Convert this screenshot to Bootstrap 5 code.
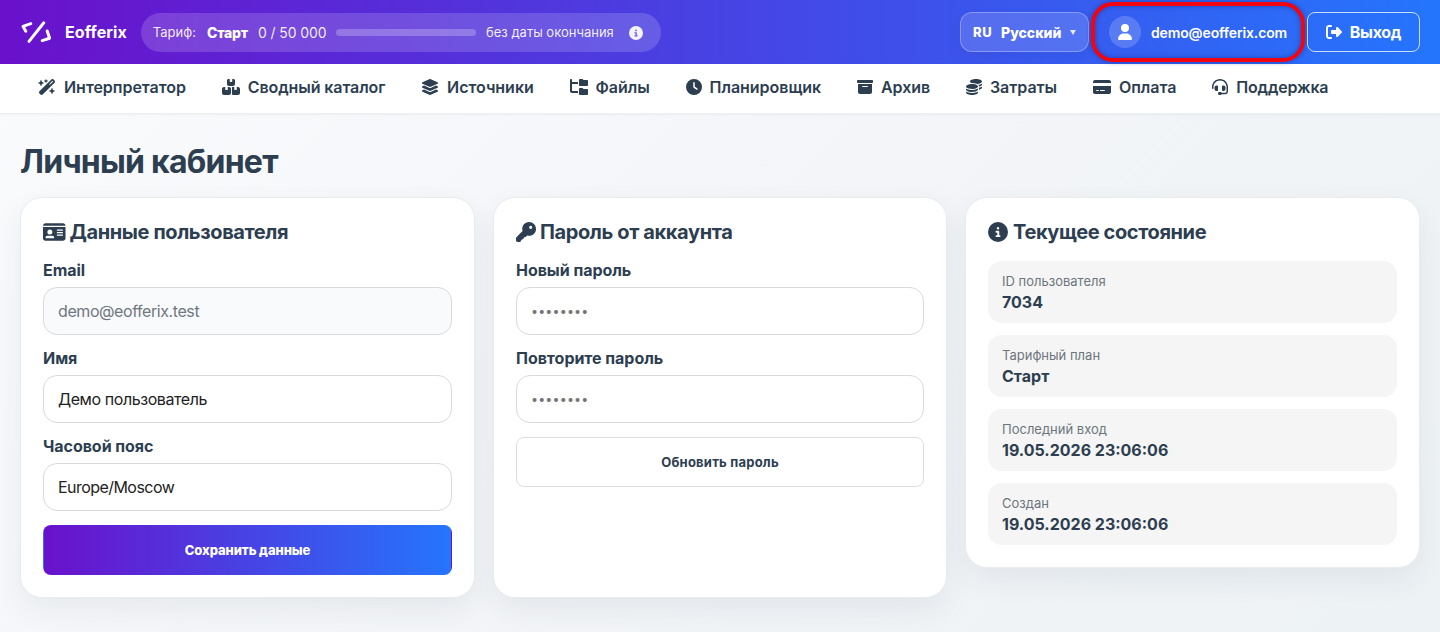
<!DOCTYPE html>
<html lang="ru">
<head>
<meta charset="utf-8">
<meta name="viewport" content="width=device-width, initial-scale=1">
<title>Личный кабинет — Eofferix</title>
<link href="https://cdn.jsdelivr.net/npm/bootstrap@5.3.0/dist/css/bootstrap.min.css" rel="stylesheet">
<style>
body{font-family:Inter,"Liberation Sans",sans-serif;font-size:16px;line-height:1.5;color:#2c3e50;min-height:632px;background:linear-gradient(135deg,#fafbfd 0%,#f3f5f8 50%,#edf2f5 100%);overflow:hidden}
.fa{height:1em;width:auto;fill:currentColor;flex:none;display:block}
.topbar{height:64px;background:linear-gradient(90deg,#6a11cb,#2575fc);padding:0 20px;color:#fff}
.brand-name{margin-left:13px;letter-spacing:.1px}
.plan{height:39px;border-radius:20px;background:rgba(255,255,255,.16);padding:1px 18px 0 12px;font-size:13px;margin-left:14px;width:520px;color:rgba(255,255,255,.92)}
.plan-name{font-size:14px;font-weight:800;color:#fff;margin:0 10px 0 11px;letter-spacing:-.2px}
.plan-usage{font-size:14px;letter-spacing:-.12px;width:69px;white-space:nowrap}
.meter{width:140px;height:7px;border-radius:4px;background:rgba(255,255,255,.24);margin:0 10px 0 9px}
.lang{height:40px;width:129px;border:1px solid rgba(255,255,255,.3);border-radius:12px;background:rgba(255,255,255,.14);font-size:14px;font-weight:800;padding:1px 12px 0;box-shadow:0 4px 12px rgba(0,0,0,.05)}
.lang-code{font-size:13px;letter-spacing:.6px;width:28px;padding-top:1px}
.caret{width:6px;height:5px;background:rgba(255,255,255,.85);clip-path:polygon(0 0,100% 0,50% 100%)}
.acct{width:214px;height:60px;border:4px solid #f2050f;border-radius:22px;margin:0 2px;padding-left:14px;font-size:14px;font-weight:600;letter-spacing:-.13px;gap:10px;box-shadow:0 0 5px rgba(20,20,100,.45),inset 0 0 5px rgba(20,20,100,.45)}
.face{width:32px;height:32px;background:rgba(255,255,255,.18);font-size:16px}
.exit{height:40px;width:113px;border:1px solid rgba(255,255,255,.75);border-radius:8px;font-weight:700;letter-spacing:-.3px;gap:8px;color:#fff;padding:0}
.menubar{height:50px;padding:0 20px;background:#fff;border-bottom:1px solid #eceff2;font-weight:600;box-shadow:0 1px 3px rgba(0,0,0,.04)}
.menubar a{color:#2c3e50;gap:8px;padding:0 17.8px 0 18px;height:46px;white-space:nowrap;letter-spacing:-.03px}
h1{font-size:32px;font-weight:700;line-height:38px;letter-spacing:-.76px;margin:0 0 16px}
.page-area{padding:29px 20px 0}
.panels{display:grid;grid-template-columns:455px 454px 455px;gap:18px;align-items:start}
.panel{background:#fff;border:1px solid #e9ecef;border-radius:22px;padding:22px;box-shadow:0 12px 30px rgba(40,50,70,.07)}
.panel.tall{height:401px}
h2{font-size:20px;font-weight:700;line-height:24px;letter-spacing:-.39px;margin:0 0 16px;gap:4px}
h2.state-title{gap:5px;margin-bottom:17px}
.form-label{font-weight:700;line-height:20px;letter-spacing:-.04px;margin:0 0 7px;display:block}
.form-control{height:48px;border-radius:14px;border-color:#d9dadc;padding:0 14px;margin-bottom:13px;color:#222;font-size:16px;letter-spacing:-.42px}
.form-control:disabled{background:#f9fafc;color:#6f7780}
.form-control::placeholder{color:#757575;font-size:12.5px;letter-spacing:.15px;position:relative;top:-1px}
.act{height:50px;width:100%;border-radius:8px;font-size:13px;font-weight:700;margin-top:1px;padding-top:8px}
.act.save{background-image:linear-gradient(90deg,#6a11cb,#2575fc);border-color:transparent;color:#fff;font-weight:800;letter-spacing:-.1px}
.act.renew{border:1px solid #dcdee1;color:#2c3e50;letter-spacing:.22px}
.fact{height:62px;border-radius:14px;background:#f5f5f5;padding:11px 14px;margin-bottom:12px;font-weight:700;line-height:21px}
.fact:last-child{margin-bottom:0}
.fact small{font-size:13px;font-weight:400;color:#6c757d;line-height:19px;margin-bottom:1px;display:block}
</style>
</head>
<body>
<header class="topbar d-flex align-items-center">
  <svg width="32" height="24" viewBox="0 0 32 24" fill="none" stroke="#fff" stroke-width="3" stroke-linecap="round" stroke-linejoin="round"><path d="M10.800 3.700 3 6.300 5.800 11.200M23.800 2.800 9 21.400M27.200 11l2.400 7.200-7.400 2.400"/></svg>
  <strong class="brand-name">Eofferix</strong>
  <div class="plan d-flex align-items-center">
    <span>Тариф:</span><strong class="plan-name">Старт</strong><span class="plan-usage">0 / 50 000</span>
    <div class="meter"></div><span>без даты окончания</span>
    <svg class="fa ms-auto" style="font-size:14px" viewBox="0 0 512 512"><path d="M256 512A256 256 0 1 0 256 0a256 256 0 1 0 0 512zM216 336h24V272H216c-13.300 0-24-10.700-24-24s10.700-24 24-24h48c13.300 0 24 10.700 24 24v88h8c13.300 0 24 10.700 24 24s-10.700 24-24 24H216c-13.300 0-24-10.700-24-24s10.700-24 24-24zm40-208a32 32 0 1 1 0 64 32 32 0 1 1 0-64z"/></svg>
  </div>
  <div class="lang ms-auto d-flex align-items-center"><span class="lang-code">RU</span><span>Русский</span><i class="caret ms-auto"></i></div>
  <div class="acct d-flex align-items-center">
    <span class="face rounded-circle d-flex align-items-center justify-content-center"><svg class="fa" viewBox="0 0 448 512"><path d="M224 256A128 128 0 1 0 224 0a128 128 0 1 0 0 256zm-45.700 48C79.800 304 0 383.800 0 482.300C0 498.700 13.300 512 29.700 512H418.300c16.400 0 29.700-13.300 29.700-29.700C448 383.800 368.200 304 269.700 304H178.300z"/></svg></span>
    <span>demo@eofferix.com</span>
  </div>
  <a class="exit btn d-flex align-items-center justify-content-center"><svg class="fa" viewBox="0 0 512 512"><path d="M377.900 105.900L500.700 228.700c7.200 7.200 11.300 17.100 11.300 27.300s-4.100 20.100-11.300 27.300L377.900 406.100c-6.400 6.400-15 9.900-24 9.900c-18.700 0-33.900-15.200-33.900-33.900l0-62.100-128 0c-17.700 0-32-14.300-32-32l0-64c0-17.700 14.300-32 32-32l128 0 0-62.100c0-18.700 15.200-33.900 33.900-33.900c9 0 17.600 3.600 24 9.900zM160 96L96 96c-17.700 0-32 14.300-32 32l0 256c0 17.700 14.300 32 32 32l64 0c17.700 0 32 14.300 32 32s-14.300 32-32 32l-64 0c-53 0-96-43-96-96L0 128C0 75 43 32 96 32l64 0c17.700 0 32 14.300 32 32s-14.300 32-32 32z"/></svg>Выход</a>
</header>
<nav class="menubar d-flex">
  <a class="d-flex align-items-center text-decoration-none"><svg class="fa" viewBox="0 0 576 512"><path d="M234.700 42.700L197 56.800c-3 1.100-5 4-5 7.200s2 6.100 5 7.200l37.700 14.100L248.800 123c1.100 3 4 5 7.200 5s6.100-2 7.200-5l14.100-37.700L315 71.200c3-1.100 5-4 5-7.200s-2-6.100-5-7.200L277.300 42.700 263.200 5c-1.100-3-4-5-7.200-5s-6.100 2-7.200 5L234.700 42.700zM46.100 395.400c-18.700 18.700-18.700 49.100 0 67.900l34.600 34.600c18.700 18.700 49.100 18.700 67.900 0L529.900 116.500c18.700-18.700 18.700-49.100 0-67.900L495.300 14.100c-18.700-18.700-49.100-18.700-67.900 0L46.100 395.400zM484.600 82.600l-105 105-23.300-23.300 105-105 23.300 23.300zM7.500 117.200C3 118.900 0 123.200 0 128s3 9.100 7.500 10.800L64 160l21.200 56.500c1.700 4.500 6 7.500 10.800 7.500s9.100-3 10.800-7.500L128 160l56.500-21.200c4.500-1.700 7.500-6 7.500-10.800s-3-9.100-7.500-10.800L128 96 106.800 39.500C105.100 35 100.800 32 96 32s-9.100 3-10.800 7.500L64 96 7.500 117.200zm352 256c-4.500 1.700-7.500 6-7.500 10.800s3 9.100 7.500 10.800L416 416l21.200 56.500c1.700 4.500 6 7.500 10.800 7.500s9.100-3 10.800-7.500L480 416l56.500-21.200c4.500-1.700 7.500-6 7.500-10.800s-3-9.100-7.500-10.800L480 352l-21.200-56.500c-1.700-4.500-6-7.500-10.800-7.500s-9.100 3-10.800 7.500L416 352l-56.500 21.200z"/></svg>Интерпретатор</a>
  <a class="d-flex align-items-center text-decoration-none" style="letter-spacing:-.1px"><svg class="fa" viewBox="0 0 576 512"><path d="M248 0H208c-26.500 0-48 21.500-48 48V160c0 35.300 28.700 64 64 64H352c35.300 0 64-28.700 64-64V48c0-26.500-21.500-48-48-48H328V80c0 8.800-7.200 16-16 16H264c-8.800 0-16-7.200-16-16V0zM64 256c-35.300 0-64 28.700-64 64V448c0 35.300 28.700 64 64 64H224c35.300 0 64-28.700 64-64V320c0-35.300-28.700-64-64-64H184v80c0 8.800-7.200 16-16 16H120c-8.800 0-16-7.200-16-16V256H64zM352 512H512c35.300 0 64-28.700 64-64V320c0-35.300-28.700-64-64-64H472v80c0 8.800-7.200 16-16 16H408c-8.800 0-16-7.200-16-16V256H352c-15 0-28.800 5.100-39.700 13.800c4.900 10.400 7.700 22 7.700 34.200V464c0 12.200-2.800 23.800-7.700 34.200C323.200 506.900 337 512 352 512z"/></svg>Сводный каталог</a>
  <a class="d-flex align-items-center text-decoration-none"><svg class="fa" viewBox="0 0 576 512"><path d="M264.500 5.200c14.900-6.900 32.100-6.900 47 0l218.600 101c8.500 3.900 13.900 12.400 13.900 21.800s-5.400 17.900-13.900 21.800l-218.600 101c-14.900 6.900-32.100 6.900-47 0L45.900 149.800C37.400 145.800 32 137.300 32 128s5.400-17.900 13.900-21.800L264.500 5.200zM476.900 209.600l53.200 24.600c8.500 3.900 13.900 12.400 13.900 21.800s-5.400 17.900-13.900 21.800l-218.600 101c-14.900 6.900-32.100 6.900-47 0L45.900 277.800C37.400 273.800 32 265.300 32 256s5.400-17.900 13.900-21.800l53.200-24.600 152 70.200c23.400 10.800 50.400 10.800 73.800 0l152-70.200zm-152 198.200l152-70.200 53.200 24.600c8.500 3.900 13.900 12.400 13.900 21.800s-5.400 17.900-13.900 21.800l-218.600 101c-14.900 6.900-32.100 6.900-47 0L45.900 405.800C37.400 401.800 32 393.300 32 384s5.400-17.900 13.900-21.800l53.200-24.600 152 70.200c23.400 10.800 50.400 10.800 73.800 0z"/></svg>Источники</a>
  <a class="d-flex align-items-center text-decoration-none"><svg class="fa" viewBox="0 0 576 512"><path d="M64 32C64 14.300 49.700 0 32 0S0 14.300 0 32v96V384c0 35.300 28.700 64 64 64H256V384H64V160H256V96H64V32zM288 192c0 17.700 14.300 32 32 32H544c17.700 0 32-14.300 32-32V64c0-17.700-14.300-32-32-32H445.300c-8.500 0-16.600-3.400-22.600-9.400L409.400 9.400c-6-6-14.100-9.400-22.600-9.400H320c-17.700 0-32 14.300-32 32V192zm0 288c0 17.700 14.300 32 32 32H544c17.700 0 32-14.300 32-32V352c0-17.700-14.300-32-32-32H445.300c-8.500 0-16.600-3.400-22.600-9.400l-13.300-13.300c-6-6-14.100-9.400-22.600-9.400H320c-17.700 0-32 14.300-32 32V480z"/></svg>Файлы</a>
  <a class="d-flex align-items-center text-decoration-none"><svg class="fa" viewBox="0 0 512 512"><path d="M256 0a256 256 0 1 1 0 512A256 256 0 1 1 256 0zM232 120V256c0 8 4 15.500 10.700 20l96 64c11 7.400 25.900 4.400 33.300-6.700s4.400-25.900-6.700-33.300L280 243.200V120c0-13.300-10.700-24-24-24s-24 10.700-24 24z"/></svg>Планировщик</a>
  <a class="d-flex align-items-center text-decoration-none"><svg class="fa" viewBox="0 0 512 512"><path d="M32 32H480c17.700 0 32 14.300 32 32V96c0 17.700-14.300 32-32 32H32C14.300 128 0 113.700 0 96V64C0 46.300 14.300 32 32 32zm0 128H480V416c0 35.300-28.700 64-64 64H96c-35.300 0-64-28.700-64-64V160zm128 80c0 8.800 7.200 16 16 16H336c8.800 0 16-7.200 16-16s-7.200-16-16-16H176c-8.800 0-16 7.200-16 16z"/></svg>Архив</a>
  <a class="d-flex align-items-center text-decoration-none"><svg class="fa" viewBox="0 0 512 512"><path d="M512 80c0 18-14.300 34.600-38.400 48c-29.100 16.100-72.500 27.500-122.300 30.900c-3.700-1.800-7.400-3.500-11.300-5C300.600 137.400 248.200 128 192 128c-8.300 0-16.400 .2-24.500 .6l-1.100-.6C142.300 114.600 128 98 128 80c0-44.200 86-80 192-80S512 35.800 512 80zM160.700 161.100c10.200-.7 20.700-1.100 31.300-1.100c62.200 0 117.400 12.300 152.500 31.400C369.300 204.900 384 221.700 384 240c0 4-.7 7.900-2.100 11.700c-4.600 13.200-17 25.300-35 35.500l-1.300 .7c-35 19.400-90.800 32-153.600 32c-59.600 0-112.900-11.300-148.200-29.100c-1.900-.9-3.700-1.900-5.500-2.900C14.300 274.600 0 258 0 240c0-34.800 53.400-64.500 128-75.400c10.500-1.500 21.400-2.700 32.700-3.500zM416 240c0-21.900-10.600-39.900-24.100-53.400c28.300-4.400 54.200-11.400 76.200-20.500c16.300-6.800 31.500-15.200 43.900-25.500V176c0 19.300-16.500 37.100-43.800 50.900c-14.600 7.400-32.400 13.700-52.400 18.500c.1-1.800 .2-3.500 .2-5.300zm-32 96c0 18-14.300 34.600-38.400 48c-1.800 1-3.600 1.900-5.500 2.900C304.900 404.700 251.600 416 192 416c-62.800 0-118.600-12.600-153.600-32C14.300 370.600 0 354 0 336V300.600c12.500 10.300 27.600 18.700 43.900 25.500C83.400 342.600 135.800 352 192 352s108.600-9.400 148.100-25.900c7.800-3.200 15.300-6.900 22.400-10.900c6.100-3.400 11.800-7.200 17.200-11.200c1.500-1.100 2.900-2.300 4.300-3.400V336zm32 0V278.100c19-4.200 36.500-9.500 52.100-16c16.300-6.800 31.500-15.200 43.900-25.500V272c0 10.500-5 21-14.900 30.900c-16.300 16.300-45 29.700-81.300 38.400c.1-1.700 .2-3.500 .2-5.300zM192 448c56.200 0 108.600-9.400 148.100-25.900c16.300-6.800 31.500-15.200 43.900-25.500V432c0 44.200-86 80-192 80S0 476.200 0 432V396.600c12.500 10.300 27.600 18.700 43.900 25.500C83.400 438.600 135.800 448 192 448z"/></svg>Затраты</a>
  <a class="d-flex align-items-center text-decoration-none"><svg class="fa" viewBox="0 0 576 512"><path d="M64 32C28.700 32 0 60.700 0 96v32H576V96c0-35.300-28.700-64-64-64H64zM576 224H0V416c0 35.300 28.700 64 64 64H512c35.300 0 64-28.700 64-64V224zM112 352h64c8.800 0 16 7.200 16 16s-7.200 16-16 16H112c-8.800 0-16-7.200-16-16s7.200-16 16-16zm112 16c0-8.800 7.200-16 16-16H368c8.800 0 16 7.200 16 16s-7.200 16-16 16H240c-8.800 0-16-7.200-16-16z"/></svg>Оплата</a>
  <a class="d-flex align-items-center text-decoration-none" style="letter-spacing:-.15px"><svg class="fa" viewBox="0 0 512 512"><path d="M256 48C141.100 48 48 141.100 48 256v40c0 13.300-10.700 24-24 24s-24-10.700-24-24V256C0 114.600 114.600 0 256 0S512 114.600 512 256V400.100c0 48.600-39.400 88-88.100 88L313.600 488c-8.300 14.300-23.800 24-41.600 24H240c-26.500 0-48-21.500-48-48s21.500-48 48-48h32c17.800 0 33.300 9.700 41.600 24l110.400 .1c22.100 0 40-17.900 40-40V256c0-114.900-93.100-208-208-208zM144 208h16c17.700 0 32 14.300 32 32V352c0 17.700-14.300 32-32 32H144c-35.300 0-64-28.700-64-64V272c0-35.300 28.700-64 64-64zm224 0c35.300 0 64 28.700 64 64v48c0 35.300-28.700 64-64 64H352c-17.700 0-32-14.300-32-32V240c0-17.700 14.300-32 32-32h16z"/></svg>Поддержка</a>
</nav>
<main class="page-area">
  <h1>Личный кабинет</h1>
  <div class="panels">
    <form class="panel tall">
      <h2 class="d-flex align-items-center"><svg class="fa" viewBox="0 0 576 512"><path d="M0 96l576 0c0-35.300-28.700-64-64-64H64C28.700 32 0 60.700 0 96zm0 32V416c0 35.300 28.700 64 64 64H512c35.300 0 64-28.700 64-64V128H0zM64 405.300c0-29.500 23.900-53.300 53.300-53.300H234.700c29.500 0 53.300 23.900 53.300 53.300c0 5.900-4.800 10.700-10.700 10.700H74.700c-5.900 0-10.700-4.800-10.700-10.700zM176 192a64 64 0 1 1 0 128 64 64 0 1 1 0-128zm176 16c0-8.800 7.200-16 16-16H496c8.800 0 16 7.200 16 16s-7.200 16-16 16H368c-8.800 0-16-7.200-16-16zm0 64c0-8.800 7.200-16 16-16H496c8.800 0 16 7.200 16 16s-7.200 16-16 16H368c-8.800 0-16-7.200-16-16zm0 64c0-8.800 7.200-16 16-16H496c8.800 0 16 7.200 16 16s-7.200 16-16 16H368c-8.800 0-16-7.200-16-16z"/></svg>Данные пользователя</h2>
      <label class="form-label">Email</label>
      <input class="form-control" value="demo@eofferix.test" disabled>
      <label class="form-label">Имя</label>
      <input class="form-control" value="Демо пользователь">
      <label class="form-label">Часовой пояс</label>
      <input class="form-control" style="letter-spacing:-.55px" value="Europe/Moscow">
      <button type="button" class="act save btn">Сохранить данные</button>
    </form>
    <form class="panel tall">
      <h2 class="d-flex align-items-center"><svg class="fa" viewBox="0 0 512 512"><path d="M336 352c97 0 176-79 176-176S433 0 336 0 160 79 160 176c0 19 3 37 8 54L16 382c-10 10-16 24-16 38v48c0 24 20 44 44 44h40c20 0 38-12 44-34 4-18 10-26 28-30 22-4 34-12 38-32 4-18 14-30 34-32 20-2 36-10 54-40 17 5 35 8 54 8zM376 96a40 40 0 1 1 0 80 40 40 0 1 1 0-80z"/></svg>Пароль от аккаунта</h2>
      <label class="form-label">Новый пароль</label>
      <input class="form-control" type="password" placeholder="••••••••">
      <label class="form-label">Повторите пароль</label>
      <input class="form-control" type="password" placeholder="••••••••">
      <button type="button" class="act renew btn">Обновить пароль</button>
    </form>
    <section class="panel">
      <h2 class="state-title d-flex align-items-center"><svg class="fa" viewBox="0 0 512 512"><path d="M256 512A256 256 0 1 0 256 0a256 256 0 1 0 0 512zM216 336h24V272H216c-13.300 0-24-10.700-24-24s10.700-24 24-24h48c13.300 0 24 10.700 24 24v88h8c13.300 0 24 10.700 24 24s-10.700 24-24 24H216c-13.300 0-24-10.700-24-24s10.700-24 24-24zm40-208a32 32 0 1 1 0 64 32 32 0 1 1 0-64z"/></svg>Текущее состояние</h2>
      <div class="fact"><small>ID пользователя</small>7034</div>
      <div class="fact"><small>Тарифный план</small>Старт</div>
      <div class="fact"><small>Последний вход</small>19.05.2026 23:06:06</div>
      <div class="fact"><small>Создан</small>19.05.2026 23:06:06</div>
    </section>
  </div>
</main>
<script src="https://cdn.jsdelivr.net/npm/bootstrap@5.3.0/dist/js/bootstrap.bundle.min.js"></script>
</body>
</html>
